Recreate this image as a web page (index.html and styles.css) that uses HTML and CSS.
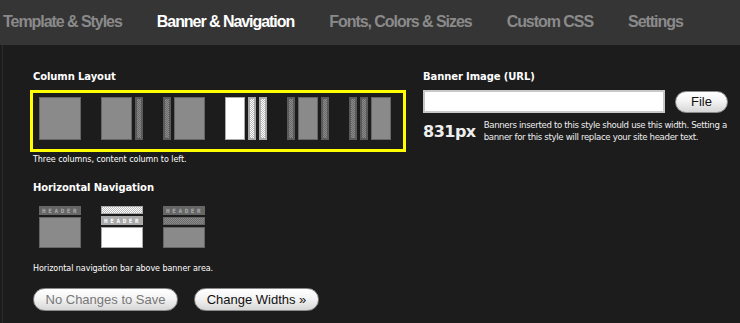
FILE: index.html
```html
<!DOCTYPE html>
<html>
<head>
<meta charset="utf-8">
<link rel="stylesheet" href="styles.css">
</head>
<body>
<nav class="tabs">
  <span class="tab">Template &amp; Styles</span>
  <span class="tab active">Banner &amp; Navigation</span>
  <span class="tab">Fonts, Colors &amp; Sizes</span>
  <span class="tab">Custom CSS</span>
  <span class="tab">Settings</span>
</nav>
<main class="content">
  <section class="left">
    <h3 class="label">Column Layout</h3>
    <div class="chooser selected-box">
      <div class="opt"><div class="col main"></div></div>
      <div class="opt"><div class="col main"></div><div class="col side"></div></div>
      <div class="opt"><div class="col side"></div><div class="col main"></div></div>
      <div class="opt on"><div class="col main"></div><div class="col side"></div><div class="col side"></div></div>
      <div class="opt"><div class="col side"></div><div class="col main"></div><div class="col side"></div></div>
      <div class="opt"><div class="col side"></div><div class="col side"></div><div class="col main"></div></div>
    </div>
    <p class="desc">Three columns, content column to left.</p>

    <h3 class="label label2">Horizontal Navigation</h3>
    <div class="chooser nav-chooser">
      <div class="nopt">
        <div class="hdr">HEADER</div>
        <div class="body tall"></div>
      </div>
      <div class="nopt on">
        <div class="bar"></div>
        <div class="hdr">HEADER</div>
        <div class="body"></div>
      </div>
      <div class="nopt">
        <div class="hdr">HEADER</div>
        <div class="bar"></div>
        <div class="body"></div>
      </div>
    </div>
    <p class="desc desc2">Horizontal navigation bar above banner area.</p>

    <div class="buttons">
      <button class="btn disabled">No Changes to Save</button>
      <button class="btn">Change Widths »</button>
    </div>
  </section>
  <section class="right">
    <h3 class="label">Banner Image (URL)</h3>
    <div class="url-row">
      <input class="url" type="text">
      <button class="btn file">File</button>
    </div>
    <div class="width-row">
      <span class="px">831px</span>
      <span class="note">Banners inserted to this style should use this width. Setting a<br>banner for this style will replace your site header text.</span>
    </div>
  </section>
</main>
</body>
</html>
```
FILE: styles.css
```css
html, body {
  margin: 0;
  padding: 0;
  background: #1c1c1c;
  height: 100%;
}
body {
  font-family: "DejaVu Sans", Verdana, sans-serif;
  color: #fff;
}
.tabs {
  height: 45px;
  background: #353535;
  display: flex;
  align-items: center;
  gap: 35px;
  padding-left: 3px;
  font-family: "Liberation Sans", Arial, sans-serif;
  font-weight: bold;
  font-size: 16px;
  letter-spacing: -1.05px;
  padding-bottom: 2px;
  box-sizing: border-box;
}
.tab { color: #8a8a8a; }
.tab.active { color: #fff; }

.content {
  display: flex;
  border-left: 1px solid #2c2c2c;
  margin-left: 2px;
  padding-left: 27px;
  padding-top: 25px;
  min-height: 278px;
  box-sizing: border-box;
}
.left { width: 376px; flex: none; }
.right { margin-left: 17px; width: 310px; flex: none; }

.label {
  margin: 0;
  font-size: 10px;
  font-weight: bold;
  line-height: 13px;
  padding-left: 3px;
  letter-spacing: -0.1px;
}
.right .label { padding-left: 0; }

.chooser {
  margin-top: 7px;
  border: 3px solid transparent;
  display: flex;
  gap: 20px;
  padding: 4px 0 9px 6px;
  height: 43px;
}
.selected-box { border-color: #ffff00; }

.opt {
  width: 42px;
  height: 43px;
  display: flex;
  gap: 3px;
}
.col {
  box-sizing: border-box;
  height: 43px;
}
.col.main {
  flex: 1;
  background: #8a8a8a;
  border: 1px solid #666;
}
.col.side {
  width: 8px;
  border: 2px solid #5a5a5a;
  background: repeating-conic-gradient(#8a8a8a 0 25%, #6a6a6a 0 50%) 0 0 / 2px 2px;
}
.opt.on .col.main { background: #fff; border-color: #aaa; }
.opt.on .col.side {
  border-color: #aaa;
  background: repeating-conic-gradient(#fff 0 25%, #bbb 0 50%) 0 0 / 2px 2px;
}

.desc {
  margin: 2px 0 0 3px;
  font-size: 8px;
  line-height: 12px;
  letter-spacing: -0.05px;
}
.label2 { margin-top: 15px; }

.nav-chooser {
  margin-top: 7px;
  padding: 2px 0 0 6px;
  height: 42px;
}
.nopt {
  width: 42px;
  display: flex;
  flex-direction: column;
  gap: 2px;
}
.hdr {
  height: 9px;
  background: #666;
  color: #aaa;
  font-family: "DejaVu Sans Mono", monospace;
  font-size: 6px;
  font-weight: bold;
  line-height: 9px;
  letter-spacing: 2.6px;
  padding-left: 3px;
  white-space: nowrap;
}
.bar {
  height: 8px;
  box-sizing: border-box;
  border: 1px solid #666;
  background: repeating-conic-gradient(#8a8a8a 0 25%, #6a6a6a 0 50%) 0 0 / 2px 2px;
}
.body {
  box-sizing: border-box;
  height: 21px;
  background: #8a8a8a;
  border: 1px solid #666;
}
.body.tall { height: 31px; }
.nopt.on .hdr { background: #aaa; color: #fff; }
.nopt.on .bar {
  border-color: #aaa;
  background: repeating-conic-gradient(#fff 0 25%, #bbb 0 50%) 0 0 / 2px 2px;
}
.nopt.on .body { background: #fff; border-color: #aaa; }

.desc2 { margin-top: 12px; }

.buttons {
  display: flex;
  gap: 16px;
  margin-top: 13px;
  padding-left: 3px;
}
.btn {
  height: 23px;
  border-radius: 12px;
  border: 1px solid #8a8a8a;
  background: linear-gradient(#ffffff, #f4f4f4 45%, #d6d6d6);
  font-family: "Liberation Sans", Arial, sans-serif;
  font-size: 13px;
  color: #111;
  padding: 0;
  margin: 0;
  box-sizing: border-box;
}
.btn.disabled { color: #777; width: 145px; }
.buttons .btn:last-child { width: 125px; }

.url-row {
  display: flex;
  align-items: center;
  gap: 10px;
  margin-top: 7px;
}
.url {
  width: 242px;
  height: 23px;
  box-sizing: border-box;
  border: 2px solid #c8c8c8;
  background: #fff;
  margin: 0;
  padding: 0;
}
.file { width: 53px; height: 22px; font-size: 13px; }

.width-row {
  display: flex;
  align-items: center;
  gap: 8px;
  margin-top: 6px;
}
.px {
  font-size: 16px;
  font-weight: bold;
  color: #eee;
  letter-spacing: -0.5px;
  flex: none;
}
.note {
  font-size: 8.6px;
  line-height: 12px;
  color: #eee;
  letter-spacing: -0.34px;
  white-space: nowrap;
}
```
